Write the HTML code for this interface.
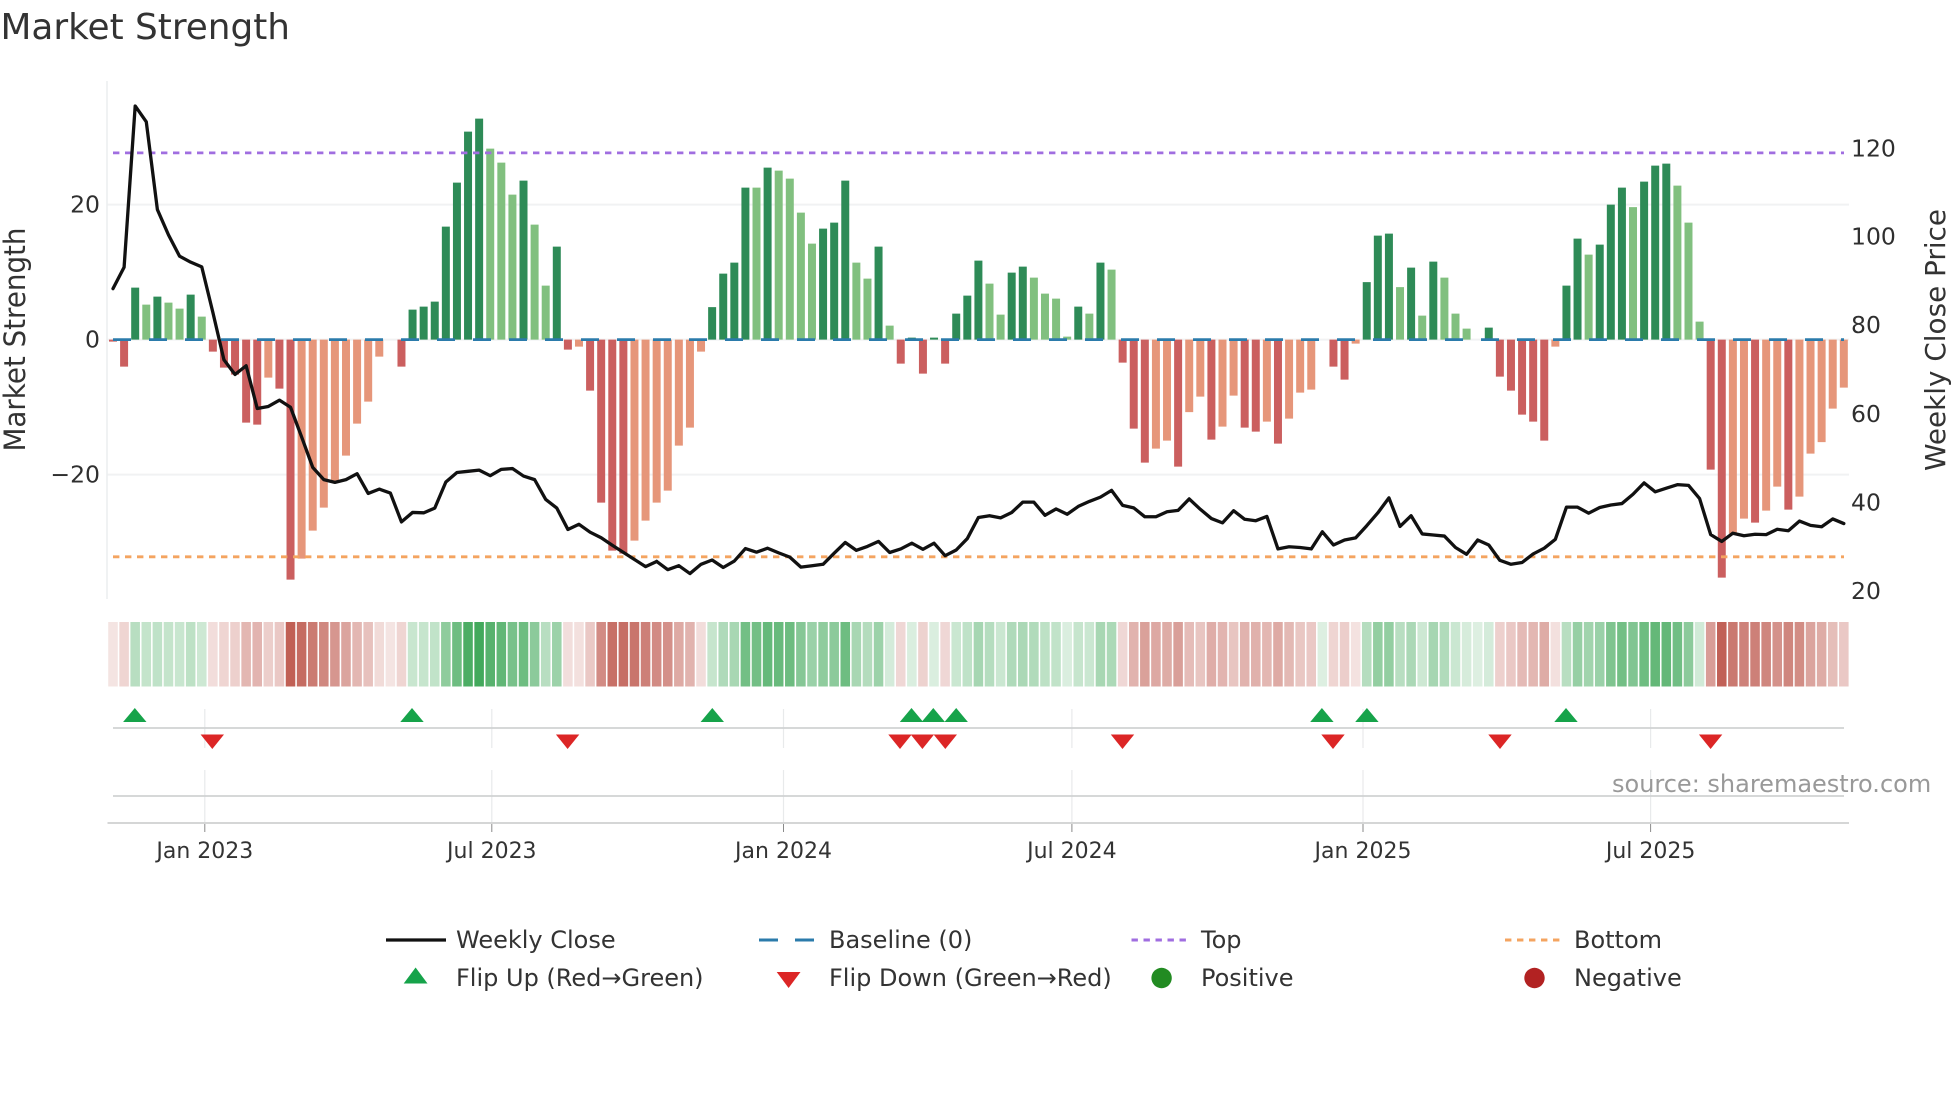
<!DOCTYPE html>
<html lang="en">
<head>
<meta charset="utf-8">
<title>Market Strength</title>
<style>
html,body{margin:0;padding:0;background:#fff;width:1960px;height:1102px;overflow:hidden}
svg{display:block}
text{font-family:"DejaVu Sans","Liberation Sans",sans-serif;fill:#333}
.t{font-size:23.5px;fill:#2f2f2f}
.l{font-size:24px;fill:#333}
.d{font-size:22px;text-anchor:middle;fill:#333}
</style>
</head>
<body>
<svg xmlns="http://www.w3.org/2000/svg" width="1960" height="1102" viewBox="0 0 1960 1102">
<rect width="1960" height="1102" fill="#fff"/>

<text x="0.5" y="39" font-size="35.5" textLength="289.5" lengthAdjust="spacingAndGlyphs" style="fill:#333">Market Strength</text>

<!-- grid -->
<g stroke="#f1f2f3" stroke-width="2" fill="none">
<path d="M107 204.6H1849M107 339.6H1849M107 474.6H1849"/>
<path d="M107 81V599" stroke="#eceeef" stroke-width="1.5"/>
</g>

<!-- bars -->
<g transform="translate(113,339.6) scale(11.095,1)" fill="none" stroke-width=".72">
<path stroke="#2e8b57" d="M2 0V-52M4 0V-43M7 0V-45M27 0V-30M28 0V-33M29 0V-38M30 0V-113M31 0V-157M32 0V-208M33 0V-221M37 0V-159M40 0V-93M54 0V-32.5M55 0V-66M56 0V-77M57 0V-152M59 0V-172M64 0V-111M65 0V-117M66 0V-159M69 0V-93M72 0V-2M74 0V-2M76 0V-26M77 0V-44M78 0V-79M81 0V-67M82 0V-73M87 0V-33M89 0V-77M113 0V-57.5M114 0V-104M115 0V-106M117 0V-72M119 0V-78M124 0V-12M131 0V-54M132 0V-101M134 0V-95M135 0V-135M136 0V-152M138 0V-158M139 0V-174M140 0V-176"/>
<path stroke="#81c07f" d="M3 0V-35M5 0V-37M6 0V-31M8 0V-23M34 0V-191M35 0V-177M36 0V-145M38 0V-115M39 0V-54M58 0V-152M60 0V-169M61 0V-161M62 0V-127M63 0V-96M67 0V-77M68 0V-61M70 0V-14M79 0V-56M80 0V-25M83 0V-62M84 0V-46M85 0V-41M86 0V-3M88 0V-26M90 0V-70M116 0V-52.5M118 0V-24M120 0V-62M121 0V-26M122 0V-11M133 0V-85M137 0V-132.5M141 0V-154M142 0V-117M143 0V-18"/>
<path stroke="#cb5f5f" d="M0 0V2M1 0V27M9 0V12M10 0V28M11 0V35M12 0V83M13 0V85M15 0V49M16 0V240M26 0V27M41 0V10M43 0V51M44 0V163M45 0V211M46 0V214M71 0V24M73 0V34M75 0V24M91 0V23M92 0V89M93 0V123M96 0V127M99 0V100M102 0V88M103 0V92M105 0V104M110 0V27M111 0V40M125 0V37M126 0V51M127 0V75M128 0V82M129 0V101M144 0V130M145 0V238M148 0V183M151 0V170"/>
<path stroke="#e6967a" d="M14 0V38M17 0V219M18 0V191M19 0V168M20 0V141M21 0V116M22 0V84M23 0V62M24 0V17M42 0V7M47 0V201M48 0V181M49 0V163M50 0V151M51 0V106M52 0V88M53 0V12M94 0V109M95 0V101M97 0V72.5M98 0V57M100 0V87M101 0V56M104 0V82M106 0V79M107 0V53M108 0V50M112 0V4M130 0V7M146 0V194M147 0V179M149 0V171M150 0V147M152 0V157M153 0V114M154 0V102.5M155 0V69M156 0V48"/>
</g>

<!-- threshold lines -->
<path d="M113 339.6H1844" stroke="#2b7bab" stroke-width="2.8" stroke-dasharray="18 18" fill="none"/>
<path d="M113 152.9H1844" stroke="#a06ee0" stroke-width="2.8" stroke-dasharray="6.4 5.6" fill="none"/>
<path d="M113 556.8H1844" stroke="#f4a460" stroke-width="2.8" stroke-dasharray="6.4 5.6" fill="none"/>

<!-- weekly close -->
<g fill="none" stroke="#111" stroke-width="3.3" stroke-linejoin="round" stroke-linecap="round">
<polyline vector-effect="non-scaling-stroke" transform="translate(113,0) scale(11.095,.3954)" points="0,730 1,676 2,268 3,308 4,530 5,594 6,648 7,663 8,675 9,790 10,910 11,947 12,925 13,1033 14,1028 15,1012 16,1030 17,1105 18,1182 19,1213 20,1220 21,1213 22,1198 23,1248 24,1237 25,1247 26,1320 27,1296 28,1297 29,1285 30,1219 31,1195 32,1192 33,1189 34,1203 35,1187 36,1185 37,1204 38,1213 39,1263 40,1285 41,1339 42,1326 43,1346 44,1360 45,1379 46,1397 47,1415 48,1433 49,1420"/>
<polyline vector-effect="non-scaling-stroke" transform="translate(113,60) scale(11.095,.35714)" points="49,1404 50,1427 51,1416 52,1438 53,1412 54,1400 55,1421 56,1403 57,1368 58,1378 59,1367 60,1380 61,1392 62,1420 63,1416 64,1412 65,1381 66,1351 67,1373 68,1362 69,1348 70,1379 71,1369 72,1353 73,1370 74,1353 75,1388 76,1372 77,1340 78,1281 79,1276 80,1282 81,1267 82,1238 83,1238 84,1275 85,1257 86,1272 87,1250 88,1236 89,1224 90,1205 91,1247 92,1254 93,1279 94,1279 95,1265 96,1261 97,1229 98,1258 99,1284 100,1296 101,1262 102,1286 103,1290 104,1278 105,1369 106,1363 107,1365 108,1369 109,1321 110,1358 111,1344 112,1338 113,1304 114,1268 115,1226 116,1306 117,1276 118,1327 119,1330 120,1333 121,1365 122,1384 123,1344 124,1358 125,1401 126,1412 127,1407 128,1383 129,1367 130,1342 131,1252 132,1252 133,1269 134,1253 135,1246 136,1242 137,1216 138,1184 139,1209 140,1199 141,1189 142,1191 143,1228 144,1329 145,1348 146,1325 147,1332 148,1328 149,1329 150,1314 151,1318 152,1291 153,1303 154,1307 155,1285 156,1298"/>
</g>

<!-- heat strip -->
<g transform="translate(113,622) scale(11.095,1)" fill="none" stroke-width=".86">
<g stroke="#b84a3e">
<path opacity=".15" d="M0 0V64.5M25 0V64.5"/><path opacity=".23" d="M1 0V64.5M10 0V64.5M26 0V64.5M110 0V64.5"/>
<path opacity=".19" d="M9 0V64.5M53 0V64.5"/><path opacity=".26" d="M11 0V64.5M125 0V64.5"/>
<path opacity=".4" d="M12 0V64.5M22 0V64.5M104 0V64.5M128 0V64.5"/><path opacity=".41" d="M13 0V64.5M100 0V64.5"/>
<path opacity=".27" d="M14 0V64.5M111 0V64.5"/><path opacity=".3" d="M15 0V64.5M43 0V64.5M108 0V64.5M126 0V64.5M156 0V64.5"/>
<path opacity=".88" d="M16 0V64.5"/><path opacity=".81" d="M17 0V64.5"/><path opacity=".73" d="M18 0V64.5"/><path opacity=".66" d="M19 0V64.5"/>
<path opacity=".58" d="M20 0V64.5"/><path opacity=".5" d="M21 0V64.5M153 0V64.5"/><path opacity=".34" d="M23 0V64.5"/><path opacity=".2" d="M24 0V64.5"/>
<path opacity=".18" d="M41 0V64.5"/><path opacity=".17" d="M42 0V64.5M130 0V64.5"/><path opacity=".64" d="M44 0V64.5M49 0V64.5"/>
<path opacity=".79" d="M45 0V64.5"/><path opacity=".8" d="M46 0V64.5"/><path opacity=".76" d="M47 0V64.5"/><path opacity=".7" d="M48 0V64.5M148 0V64.5"/>
<path opacity=".61" d="M50 0V64.5"/><path opacity=".47" d="M51 0V64.5M105 0V64.5"/><path opacity=".42" d="M52 0V64.5M92 0V64.5M102 0V64.5"/>
<path opacity=".22" d="M71 0V64.5M75 0V64.5M91 0V64.5"/><path opacity=".25" d="M73 0V64.5"/><path opacity=".52" d="M93 0V64.5"/>
<path opacity=".48" d="M94 0V64.5"/><path opacity=".46" d="M95 0V64.5M129 0V64.5M154 0V64.5"/><path opacity=".53" d="M96 0V64.5"/>
<path opacity=".37" d="M97 0V64.5"/><path opacity=".32" d="M98 0V64.5M101 0V64.5"/><path opacity=".45" d="M99 0V64.5"/>
<path opacity=".43" d="M103 0V64.5"/><path opacity=".39" d="M106 0V64.5"/><path opacity=".31" d="M107 0V64.5"/><path opacity=".16" d="M112 0V64.5"/>
<path opacity=".38" d="M127 0V64.5"/><path opacity=".54" d="M144 0V64.5"/><path opacity=".87" d="M145 0V64.5"/><path opacity=".74" d="M146 0V64.5"/>
<path opacity=".69" d="M147 0V64.5"/><path opacity=".67" d="M149 0V64.5M151 0V64.5"/><path opacity=".6" d="M150 0V64.5"/><path opacity=".63" d="M152 0V64.5"/>
<path opacity=".36" d="M155 0V64.5"/>
</g>
<g stroke="#1a9638">
<path opacity=".31" d="M2 0V64.5M39 0V64.5M116 0V64.5M131 0V64.5"/><path opacity=".26" d="M3 0V64.5M5 0V64.5"/><path opacity=".28" d="M4 0V64.5M77 0V64.5"/>
<path opacity=".24" d="M6 0V64.5M27 0V64.5"/><path opacity=".29" d="M7 0V64.5M84 0V64.5"/><path opacity=".22" d="M8 0V64.5M118 0V64.5"/>
<path opacity=".25" d="M28 0V64.5M54 0V64.5M87 0V64.5"/><path opacity=".27" d="M29 0V64.5M85 0V64.5"/><path opacity=".49" d="M30 0V64.5M64 0V64.5"/>
<path opacity=".63" d="M31 0V64.5M37 0V64.5M66 0V64.5M138 0V64.5"/><path opacity=".78" d="M32 0V64.5"/><path opacity=".82" d="M33 0V64.5"/>
<path opacity=".73" d="M34 0V64.5"/><path opacity=".69" d="M35 0V64.5"/><path opacity=".59" d="M36 0V64.5"/><path opacity=".5" d="M38 0V64.5M65 0V64.5M142 0V64.5"/>
<path opacity=".43" d="M40 0V64.5M69 0V64.5"/><path opacity=".35" d="M55 0V64.5M81 0V64.5"/><path opacity=".38" d="M56 0V64.5M67 0V64.5M89 0V64.5"/>
<path opacity=".61" d="M57 0V64.5M58 0V64.5M136 0V64.5"/><path opacity=".67" d="M59 0V64.5"/><path opacity=".66" d="M60 0V64.5"/><path opacity=".64" d="M61 0V64.5"/>
<path opacity=".53" d="M62 0V64.5"/><path opacity=".44" d="M63 0V64.5M134 0V64.5"/><path opacity=".33" d="M68 0V64.5"/><path opacity=".19" d="M70 0V64.5M124 0V64.5"/>
<path opacity=".16" d="M72 0V64.5M74 0V64.5M86 0V64.5"/><path opacity=".23" d="M76 0V64.5M80 0V64.5M88 0V64.5M121 0V64.5"/><path opacity=".39" d="M78 0V64.5M119 0V64.5"/>
<path opacity=".32" d="M79 0V64.5M113 0V64.5"/><path opacity=".37" d="M82 0V64.5M117 0V64.5"/><path opacity=".34" d="M83 0V64.5M120 0V64.5"/><path opacity=".36" d="M90 0V64.5"/>
<path opacity=".15" d="M109 0V64.5M123 0V64.5"/><path opacity=".47" d="M114 0V64.5M115 0V64.5"/><path opacity=".18" d="M122 0V64.5"/><path opacity=".46" d="M132 0V64.5"/>
<path opacity=".41" d="M133 0V64.5"/><path opacity=".56" d="M135 0V64.5"/><path opacity=".55" d="M137 0V64.5"/><path opacity=".68" d="M139 0V64.5M140 0V64.5"/>
<path opacity=".62" d="M141 0V64.5"/><path opacity=".2" d="M143 0V64.5"/>
</g>
</g>

<!-- flip panels -->
<g fill="none" stroke="#e8eaeb" stroke-width="1.2">
<path d="M204.8 709V748M204.8 770V822M491.8 709V748M491.8 770V822M783.5 709V748M783.5 770V822M1071.9 709V748M1071.9 770V822M1363 709V748M1363 770V822M1650.6 709V748M1650.6 770V822"/>
</g>
<path d="M113 728H1844M113 796H1844" stroke="#d0d2d3" stroke-width="1.8" fill="none"/>
<path d="M107.5 823H1849" stroke="#cfd0d1" stroke-width="1.8" fill="none"/>
<path d="M204.8 824V832M491.8 824V832M783.5 824V832M1071.9 824V832M1363 824V832M1650.6 824V832" stroke="#8a8a8a" stroke-width="1" fill="none"/>

<g fill="#16a34a">
<path d="M134.8 708L146.5 722H123.1Z"/>
<path d="M412 708L423.7 722H400.3Z"/>
<path d="M712.3 708L724 722H700.6Z"/>
<path d="M911.5 708L923.2 722H899.8Z"/>
<path d="M933.3 708L945 722H921.6Z"/>
<path d="M956.2 708L967.9 722H944.5Z"/>
<path d="M1321.9 708L1333.6 722H1310.2Z"/>
<path d="M1366.9 708L1378.6 722H1355.2Z"/>
<path d="M1566 708L1577.7 722H1554.3Z"/>
</g>
<g fill="#dc2626">
<path d="M212.3 749L224 734.5H200.6Z"/>
<path d="M567.6 749L579.3 734.5H555.9Z"/>
<path d="M900 749L911.7 734.5H888.3Z"/>
<path d="M922.4 749L934.1 734.5H910.7Z"/>
<path d="M945.3 749L957 734.5H933.6Z"/>
<path d="M1122.5 749L1134.2 734.5H1110.8Z"/>
<path d="M1333 749L1344.7 734.5H1321.3Z"/>
<path d="M1500 749L1511.7 734.5H1488.3Z"/>
<path d="M1710.6 749L1722.3 734.5H1698.9Z"/>
</g>

<!-- axis text -->
<text class="t" x="100" y="212.5" text-anchor="end">20</text>
<text class="t" x="100" y="347.5" text-anchor="end">0</text>
<text class="t" x="100" y="482.5" text-anchor="end">−20</text>
<text class="t" x="1851" y="156.3">120</text>
<text class="t" x="1851" y="244.5">100</text>
<text class="t" x="1851" y="333">80</text>
<text class="t" x="1851" y="422">60</text>
<text class="t" x="1851" y="510.6">40</text>
<text class="t" x="1851" y="599">20</text>
<text transform="translate(25,451.5) rotate(-90)" font-size="29" textLength="224" lengthAdjust="spacingAndGlyphs" style="fill:#333">Market Strength</text>
<text transform="translate(1945,471) rotate(-90)" font-size="28" textLength="262" lengthAdjust="spacingAndGlyphs" style="fill:#333">Weekly Close Price</text>

<text class="d" x="204.8" y="858">Jan 2023</text>
<text class="d" x="491.8" y="858">Jul 2023</text>
<text class="d" x="783.5" y="858">Jan 2024</text>
<text class="d" x="1071.9" y="858">Jul 2024</text>
<text class="d" x="1363" y="858">Jan 2025</text>
<text class="d" x="1650.6" y="858">Jul 2025</text>

<text x="1612" y="792" font-size="24" style="fill:#999">source: sharemaestro.com</text>

<!-- legend -->
<path d="M386 940H446" stroke="#111" stroke-width="3.2" fill="none"/>
<path d="M759 940H778M795 940H814" stroke="#2b7bab" stroke-width="3" fill="none"/>
<path d="M1131.5 940H1186.5" stroke="#a06ee0" stroke-width="3" stroke-dasharray="6.4 5.6" fill="none"/>
<path d="M1505 940H1559.5" stroke="#f4a460" stroke-width="3" stroke-dasharray="6.4 5.6" fill="none"/>
<path d="M415.6 967.5L427.5 983.5H403.7Z" fill="#16a34a"/>
<path d="M788.6 988L800.5 972H776.7Z" fill="#dc2626"/>
<circle cx="1161.6" cy="978" r="10.2" fill="#228b22"/>
<circle cx="1534.5" cy="978" r="10.2" fill="#b22222"/>
<text class="l" x="456" y="948">Weekly Close</text>
<text class="l" x="829" y="948">Baseline (0)</text>
<text class="l" x="1201" y="948">Top</text>
<text class="l" x="1574" y="948">Bottom</text>
<text class="l" x="456" y="986">Flip Up (Red→Green)</text>
<text class="l" x="829" y="986">Flip Down (Green→Red)</text>
<text class="l" x="1201" y="986">Positive</text>
<text class="l" x="1574" y="986">Negative</text>
</svg>
</body>
</html>
